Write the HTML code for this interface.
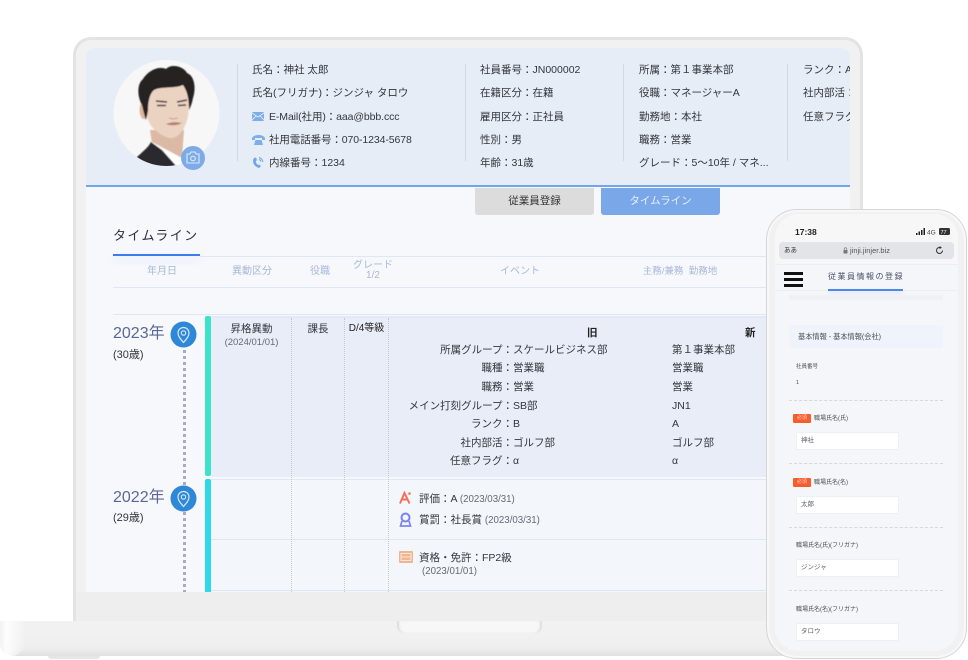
<!DOCTYPE html>
<html lang="ja"><head><meta charset="utf-8"><style>
*{box-sizing:border-box;margin:0;padding:0}
html,body{width:968px;height:660px;overflow:hidden;background:#fff}
body{position:relative;font-family:"Liberation Sans","Noto Sans CJK JP",sans-serif;color:#333}
.a{position:absolute}
.t{position:absolute;white-space:nowrap;font-size:10.5px;line-height:14px;color:#33363e}
.d{position:absolute;width:1px;top:64px;height:97px;background:#d0d9e8}
.v{position:absolute;width:0;border-left:1px dotted #c4c9d4}
.h{position:absolute;white-space:nowrap;font-size:10px;line-height:12px;color:#a9b8d6;text-align:center}
.r{text-align:right;width:170px;left:343px}
.p{position:absolute;white-space:nowrap;font-size:6px;line-height:9px;color:#4a4d55}
.in{position:absolute;width:103px;height:18px;background:#fff;border:1px solid #eef0f3;border-radius:1px;font-size:6.5px;line-height:16px;padding-left:4px;color:#5d6068}
.ds{position:absolute;width:154px;border-top:1px dashed #d6d8dc}
.bd{position:absolute;width:18px;height:9px;background:#fb5a2a;border-radius:1px;color:#ffd9cc;font-size:5px;line-height:9px;text-align:center}
</style></head><body>

<!-- laptop lid -->
<div class="a" style="left:73px;top:37px;width:790px;height:590px;border-radius:18px 18px 0 0;background:#f1f1f1;border:3px solid #e3e3e3;border-bottom:0"></div>
<!-- screen -->
<div class="a" style="left:86px;top:48px;width:764px;height:544px;background:#f6f8fc;border-radius:9px 9px 0 0;overflow:hidden">
  <div class="a" style="left:0;top:0;width:764px;height:139px;background:#e7edf7;border-bottom:2.5px solid #6fa6ee"></div>
</div>
<div class="a" style="left:76px;top:592px;width:787px;height:29px;background:#eeeeee"></div>

<!-- photo -->
<svg class="a" style="left:110px;top:58px" width="115" height="115" viewBox="0 0 115 115">
<defs><clipPath id="c"><circle cx="56.500" cy="55" r="53"/></clipPath><filter id="b"><feGaussianBlur stdDeviation=".6"/></filter></defs>
<circle cx="56.500" cy="55" r="53" fill="#f7f7f7"/>
<g clip-path="url(#c)"><g filter="url(#b)">
<path d="M40 72L43 92L72 100L74 72Z" fill="#dcb9a4"/>
<path d="M42 84L72 100L70 112H50Z" fill="#fff"/>
<path d="M26 100C32 94 38 90 41 84L52 92L68 110H26Z" fill="#2c2c2f"/>
<path d="M36 34C35 50 36 62 42 69C48 75 56 81 63 80C71 78 76 68 78 58L81 30L60 20Z" fill="#ebd3c2"/>
<ellipse cx="34" cy="52" rx="4.500" ry="9" fill="#dfb5a0"/>
<path d="M32 47C27 38 27 26 33 21C37 14 48 7 56 11C62 5 74 9 77 15C85 18 86 31 83 40C82 45 81 48 79 52C79 43 78 34 73 27C64 31 52 28 44 32C39 36 38 46 38 52L36 62C34 56 33 51 32 47Z" fill="#262322"/>
<path d="M46 43L57 44M67 44L77 42" stroke="#38302c" stroke-width="1.500" fill="none"/>
<path d="M47 47.500L56 47.500M68 47.500L76 47" stroke="#4a3a33" stroke-width="1.400" fill="none"/>
<path d="M59 60L63 61L68 60" stroke="#c9a08c" stroke-width="1" fill="none"/>
<path d="M56 66Q63 63 72 65Q64 69 56 66Z" fill="#b87c6c"/>
</g></g>
<circle cx="83" cy="100" r="12" fill="#7cabe8"/>
<path d="M77 96H80L81 94H85L86 96H89V105H77Z" fill="none" stroke="#dce9fa" stroke-width="1.100"/>
<circle cx="83" cy="100.500" r="2.300" fill="none" stroke="#dce9fa" stroke-width="1.100"/>
</svg>

<!-- header dividers -->
<div class="d" style="left:237px"></div><div class="d" style="left:465px"></div><div class="d" style="left:623px"></div><div class="d" style="left:787px"></div>

<!-- col 1 -->
<div class="t" style="left:252px;top:63px">氏名：神社 太郎</div>
<div class="t" style="left:252px;top:86px">氏名(フリガナ)：ジンジャ タロウ</div>
<svg class="a" style="left:252px;top:112px" width="12" height="9" viewBox="0 0 12 9"><rect width="12" height="9" rx="1" fill="#7eaee9"/><path d="M0 1L6 5L12 1M0 8L4 4M12 8L8 4" stroke="#e7edf7" stroke-width=".8" fill="none"/></svg>
<div class="t" style="left:269px;top:110px;letter-spacing:-.1px">E-Mail(社用)：aaa@bbb.ccc</div>
<svg class="a" style="left:252px;top:134px" width="13" height="12" viewBox="0 0 13 12"><path d="M0 4C2 0 11 0 13 4L13 6H10V4H3V6H0Z" fill="#7eaee9"/><path d="M2 11L3.500 6H9.500L11 11Z" fill="#7eaee9"/></svg>
<div class="t" style="left:269px;top:133px;letter-spacing:-.1px">社用電話番号：070-1234-5678</div>
<svg class="a" style="left:252px;top:156px" width="12" height="13" viewBox="0 0 12 13"><path d="M2 2C0 5 1 10 7 12L9 10L7 8.500L6 9C4.500 8 3.800 6.500 3.800 5L5 4.300L4 1.500Z" fill="#6fa6e6"/><path d="M7 1.500C9 2 10.500 3.500 11 6M7 3.500C8 3.800 8.800 4.500 9 5.600" stroke="#6fa6e6" fill="none"/></svg>
<div class="t" style="left:269px;top:156px">内線番号：1234</div>

<!-- col 2 -->
<div class="t" style="left:480px;top:63px">社員番号：JN000002</div>
<div class="t" style="left:480px;top:86px">在籍区分：在籍</div>
<div class="t" style="left:480px;top:110px">雇用区分：正社員</div>
<div class="t" style="left:480px;top:133px">性別：男</div>
<div class="t" style="left:480px;top:156px">年齢：31歳</div>
<!-- col 3 -->
<div class="t" style="left:639px;top:63px">所属：第１事業本部</div>
<div class="t" style="left:639px;top:86px">役職：マネージャーA</div>
<div class="t" style="left:639px;top:110px">勤務地：本社</div>
<div class="t" style="left:639px;top:133px">職務：営業</div>
<div class="t" style="left:639px;top:156px">グレード：5〜10年 / マネ...</div>
<!-- col 4 -->
<div class="a" style="left:803px;top:55px;width:47px;height:110px;overflow:hidden">
  <div class="t" style="left:0;top:8px">ランク：A</div>
  <div class="t" style="left:0;top:31px">社内部活：</div>
  <div class="t" style="left:0;top:55px">任意フラグ</div>
</div>

<!-- tabs -->
<div class="a" style="left:475px;top:188px;width:119px;height:27px;background:#dcdcdc;border-radius:0 0 3px 3px;text-align:center;font-size:10.5px;line-height:27px;color:#333">従業員登録</div>
<div class="a" style="left:601px;top:188px;width:119px;height:27px;background:#7aa7e8;border-radius:0 0 3px 3px;text-align:center;font-size:10.5px;line-height:27px;color:#e8f0fc">タイムライン</div>

<!-- title -->
<div class="t" style="left:113px;top:227px;font-size:13px;line-height:17px;letter-spacing:1.4px;color:#2b2f3e">タイムライン</div>
<div class="a" style="left:113px;top:254px;width:87px;height:2px;background:#3f7bef;box-shadow:0 4px 8px rgba(90,140,240,.18)"></div>
<div class="a" style="left:200px;top:256px;width:650px;height:1px;background:#e0e6f2"></div>
<div class="a" style="left:113px;top:287px;width:737px;height:1px;background:#dfe7f6"></div>
<div class="a" style="left:113px;top:314px;width:737px;height:1px;background:#e0e6f2"></div>

<div class="h" style="left:138px;top:266px;width:48px">年月日</div>
<div class="h" style="left:222px;top:266px;width:60px">異動区分</div>
<div class="h" style="left:300px;top:266px;width:40px">役職</div>
<div class="h" style="left:343px;top:261px;width:60px;line-height:10px">グレード<br>1/2</div>
<div class="h" style="left:490px;top:266px;width:60px">イベント</div>
<div class="h" style="left:637px;top:266px;width:86px;font-size:9.5px">主務/兼務&nbsp;&nbsp;勤務地</div>

<!-- rows -->
<div class="a" style="left:211px;top:316px;width:639px;height:161px;background:#e9edf7;border-top:2px solid #e2e8f4"></div>
<div class="a" style="left:211px;top:479px;width:639px;height:113px;background:#f3f6fb;border-top:1px solid #dfe7f4"></div>
<div class="a" style="left:211px;top:539px;width:639px;height:1px;background:#dde6f4"></div>
<div class="a" style="left:211px;top:590px;width:639px;height:1px;background:#dbe6f6"></div>
<div class="a" style="left:205px;top:316px;width:6px;height:160px;background:#3de3c9;border-radius:2px"></div>
<div class="a" style="left:205px;top:479px;width:6px;height:113px;background:#2fd8e8;border-radius:2px 2px 0 0"></div>

<div class="v" style="left:291px;top:318px;height:274px"></div>
<div class="v" style="left:344px;top:318px;height:274px"></div>
<div class="v" style="left:388px;top:318px;height:274px"></div>

<!-- years -->
<div class="t" style="left:113px;top:324px;font-size:16px;line-height:20px;color:#5b6796">2023年</div>
<div class="t" style="left:113px;top:348px;font-size:11px">(30歳)</div>
<div class="t" style="left:113px;top:488px;font-size:16px;line-height:20px;color:#5b6796">2022年</div>
<div class="t" style="left:113px;top:511px;font-size:11px">(29歳)</div>
<div class="a" style="left:183px;top:350px;width:3px;height:242px;background:repeating-linear-gradient(#a6abc9 0 3px,transparent 3px 6px)"></div>
<svg class="a" style="left:170px;top:321px" width="27" height="27" viewBox="0 0 27 27"><circle cx="13.500" cy="13.500" r="13" fill="#2f87d8"/><path d="M13.500 21.500C10 17.500 8 15 8 12A5.500 5.500 0 0 1 19 12C19 15 17 17.500 13.500 21.500Z" fill="none" stroke="#d5e8fa" stroke-width="1.200"/><circle cx="13.500" cy="12" r="2.200" fill="none" stroke="#d5e8fa" stroke-width="1.100"/></svg>
<svg class="a" style="left:170px;top:485px" width="27" height="27" viewBox="0 0 27 27"><circle cx="13.500" cy="13.500" r="13" fill="#2f87d8"/><path d="M13.500 21.500C10 17.500 8 15 8 12A5.500 5.500 0 0 1 19 12C19 15 17 17.500 13.500 21.500Z" fill="none" stroke="#d5e8fa" stroke-width="1.200"/><circle cx="13.500" cy="12" r="2.200" fill="none" stroke="#d5e8fa" stroke-width="1.100"/></svg>

<!-- row 1 cells -->
<div class="t" style="left:212px;width:79px;text-align:center;top:322px">昇格異動</div>
<div class="t" style="left:212px;width:79px;text-align:center;top:336px;font-size:9.5px;color:#666a75">(2024/01/01)</div>
<div class="t" style="left:292px;width:52px;text-align:center;top:322px">課長</div>
<div class="t" style="left:345px;width:43px;text-align:center;top:322px;font-size:10px;color:#222">D/4等級</div>

<div class="t" style="left:587px;top:326px;font-weight:bold;color:#222">旧</div>
<div class="t" style="left:745px;top:326px;font-weight:bold;color:#222">新</div>
<div class="t r" style="top:343px">所属グループ：</div><div class="t" style="left:513px;top:343px">スケールビジネス部</div><div class="t" style="left:672px;top:343px">第１事業本部</div>
<div class="t r" style="top:361px">職種：</div><div class="t" style="left:513px;top:361px">営業職</div><div class="t" style="left:672px;top:361px">営業職</div>
<div class="t r" style="top:380px">職務：</div><div class="t" style="left:513px;top:380px">営業</div><div class="t" style="left:672px;top:380px">営業</div>
<div class="t r" style="top:399px">メイン打刻グループ：</div><div class="t" style="left:513px;top:399px">SB部</div><div class="t" style="left:672px;top:399px">JN1</div>
<div class="t r" style="top:417px">ランク：</div><div class="t" style="left:513px;top:417px">B</div><div class="t" style="left:672px;top:417px">A</div>
<div class="t r" style="top:436px">社内部活：</div><div class="t" style="left:513px;top:436px">ゴルフ部</div><div class="t" style="left:672px;top:436px">ゴルフ部</div>
<div class="t r" style="top:454px">任意フラグ：</div><div class="t" style="left:513px;top:454px">α</div><div class="t" style="left:672px;top:454px">α</div>

<!-- row 2 events -->
<svg class="a" style="left:399px;top:491px" width="13" height="13" viewBox="0 0 13 13"><path d="M1 12.500L5.500 2L10.500 12.500M3.500 8.500H8" fill="none" stroke="#f4705f" stroke-width="2"/><circle cx="10.500" cy="2.500" r="1.300" fill="#f4705f"/></svg>
<div class="t" style="left:419px;top:492px">評価：A <span style="font-size:9.7px;color:#666a75">(2023/03/31)</span></div>
<svg class="a" style="left:399px;top:512px" width="13" height="15" viewBox="0 0 13 15"><circle cx="6.500" cy="5.500" r="4" fill="none" stroke="#7c83f2" stroke-width="2"/><path d="M3 9L1.500 14H11.500L10 9" fill="none" stroke="#7c83f2" stroke-width="1.700"/></svg>
<div class="t" style="left:419px;top:513px">賞罰：社長賞 <span style="font-size:9.7px;color:#666a75">(2023/03/31)</span></div>
<svg class="a" style="left:399px;top:551px" width="14" height="12" viewBox="0 0 14 12"><rect width="14" height="12" rx="1" fill="#f0b591"/><rect x="2" y="2.500" width="10" height="7" fill="none" stroke="#fbe6d8" stroke-width="1"/><path d="M2 6H12" stroke="#fbe6d8"/></svg>
<div class="t" style="left:419px;top:551px">資格・免許：FP2級</div>
<div class="t" style="left:422px;top:565px;font-size:9.7px;color:#666a75">(2023/01/01)</div>

<!-- laptop base -->
<div class="a" style="left:0;top:621px;width:800px;height:35px;border-radius:0 0 14px 14px;background:linear-gradient(#f1f1f1 0,#f1f1f1 45%,#ededed 80%,#e0e0e0 100%)"></div>
<div class="a" style="left:0;top:621px;width:24px;height:35px;border-radius:0 0 14px 14px;background:linear-gradient(90deg,#f2f2f2 0,#fdfdfd 25%,rgba(248,248,248,.2) 100%)"></div>
<div class="a" style="left:397px;top:621px;width:145px;height:12px;border-radius:0 0 7px 7px;background:#f7f7f7;box-shadow:inset 3px 0 2px -1px #dcdcdc,inset -3px 0 2px -1px #dcdcdc"></div>
<div class="a" style="left:48px;top:656px;width:52px;height:3px;border-radius:0 0 6px 6px;background:#e6e6e6"></div>

<!-- phone -->
<div class="a" style="left:766px;top:209px;width:201px;height:450px;border-radius:31px;background:#f1f1f1;border:1px solid #d6d6d6;box-shadow:inset 0 0 0 2px #f8f8f8">
  <div class="a" style="left:8px;top:4px;width:183px;height:437px;border-radius:24px;background:#f4f6fa;overflow:hidden;filter:blur(.25px)">
    <div class="a" style="left:0;top:0;width:183px;height:50px;background:#f7f7f7"></div>
    <div class="a" style="left:20px;top:12px;font-size:8.5px;font-weight:bold;line-height:12px;color:#222">17:38</div>
    <svg class="a" style="left:141px;top:13px" width="34" height="9" viewBox="0 0 34 9"><path d="M0 6h1.500v2H0zM2.500 4.500H4V8H2.500zM5 3h1.500v5H5zM7.500 1H9v7H7.500z" fill="#222"/><text x="11" y="7.500" font-size="6.500" fill="#444" font-family="Liberation Sans">4G</text><rect x="23" y="1" width="11" height="7" rx="1.500" fill="#333"/><text x="24.500" y="7" font-size="5.500" fill="#fff" font-family="Liberation Sans">77</text></svg>
    <div class="a" style="left:4px;top:28px;width:175px;height:17px;border-radius:4px;background:#e3e4e8"></div>
    <div class="a" style="left:9px;top:32px;font-size:6.500px;line-height:9px;color:#333">ああ</div>
    <svg class="a" style="left:68px;top:33px" width="5" height="7" viewBox="0 0 5 7"><path d="M1.200 3V2a1.300 1.300 0 0 1 2.600 0V3" fill="none" stroke="#777" stroke-width=".7"/><rect x=".5" y="3" width="4" height="3.500" rx=".5" fill="#777"/></svg>
    <div class="a" style="left:75px;top:32px;font-size:7.500px;line-height:10px;color:#555;white-space:nowrap">jinji.jinjer.biz</div>
    <svg class="a" style="left:160px;top:32px" width="9" height="9" viewBox="0 0 9 9"><path d="M7.500 4.500A3 3 0 1 1 5 1.500" fill="none" stroke="#333"/><path d="M4.500 0L7 1.700L4.500 3Z" fill="#333"/></svg>
    <div class="a" style="left:0;top:50px;width:183px;height:1px;background:#eceef2"></div>
    <div class="a" style="left:9px;top:58px;width:19px;height:15px;border-top:3px solid #111;border-bottom:3px solid #111"><div style="height:3px;margin-top:3px;background:#111"></div></div>
    <div class="a" style="left:0;top:76px;width:183px;height:1px;background:#eceef2"></div>
    <div class="a" style="left:53px;top:57px;font-size:8px;line-height:12px;letter-spacing:1.500px;color:#4a5068;white-space:nowrap">従業員情報の登録</div>
    <div class="a" style="left:53px;top:75px;width:75px;height:2px;background:#4f86ea;box-shadow:0 2px 4px rgba(90,140,240,.2)"></div>
    <div class="a" style="left:14px;top:81px;width:154px;height:5px;background:#eff1f5"></div>
    <div class="a" style="left:14px;top:111px;width:154px;height:23px;background:#eff3fc"></div>
    <div class="p" style="left:23px;top:118px;font-size:7.200px">基本情報 - 基本情報(会社)</div>
    <div class="p" style="left:21px;top:149px;font-size:5.500px">社員番号</div>
    <div class="p" style="left:21px;top:165px;font-size:5.500px">1</div>
    <div class="ds" style="left:14px;top:186px"></div>
    <div class="bd" style="left:18px;top:200px">必須</div>
    <div class="p" style="left:39px;top:201px">職場氏名(氏)</div>
    <div class="in" style="left:21px;top:218px">神社</div>
    <div class="ds" style="left:14px;top:249px"></div>
    <div class="bd" style="left:18px;top:264px">必須</div>
    <div class="p" style="left:39px;top:265px">職場氏名(名)</div>
    <div class="in" style="left:21px;top:282px">太郎</div>
    <div class="ds" style="left:14px;top:313px"></div>
    <div class="p" style="left:21px;top:328px">職場氏名(氏)(フリガナ)</div>
    <div class="in" style="left:21px;top:345px">ジンジャ</div>
    <div class="ds" style="left:14px;top:376px"></div>
    <div class="p" style="left:21px;top:392px">職場氏名(名)(フリガナ)</div>
    <div class="in" style="left:21px;top:409px">タロウ</div>
  </div>
</div>
</body></html>
